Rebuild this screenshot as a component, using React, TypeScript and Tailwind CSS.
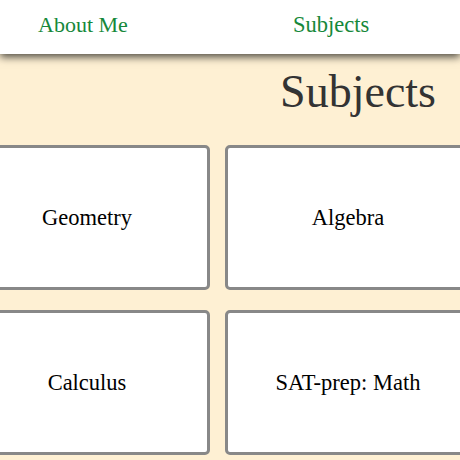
import React from "react";

const subjects = ["Geometry", "Algebra", "Calculus", "SAT-prep: Math"];

export default function App() {
  return (
    <div
      className="min-h-screen w-full overflow-hidden bg-[#fef0d3]"
      style={{ fontFamily: '"Liberation Serif", "DejaVu Serif", serif' }}
    >
      <nav className="relative z-10 flex h-[54px] items-start bg-white pl-[38px] pt-[14px] shadow-[0_3px_8px_rgba(0,0,0,0.7)]">
        <a className="w-[255px] text-[22px] leading-[22px] text-[#16883a]">About Me</a>
        <a className="text-[22.5px] leading-[22px] text-[#16883a]">Subjects</a>
      </nav>
      <h1 className="mt-[13px] pr-[24px] text-right text-[46px] leading-[50px] text-[#333333]">
        Subjects
      </h1>
      <div className="mt-[28px] ml-[-36px] grid w-[507px] grid-cols-[246px_246px] gap-x-[15px] gap-y-[20px]">
        {subjects.map((s) => (
          <div
            key={s}
            className="flex h-[145px] items-center justify-center rounded-[5px] border-[3px] border-[#888888] bg-white text-[22.5px] text-black"
          >
            {s}
          </div>
        ))}
      </div>
    </div>
  );
}
